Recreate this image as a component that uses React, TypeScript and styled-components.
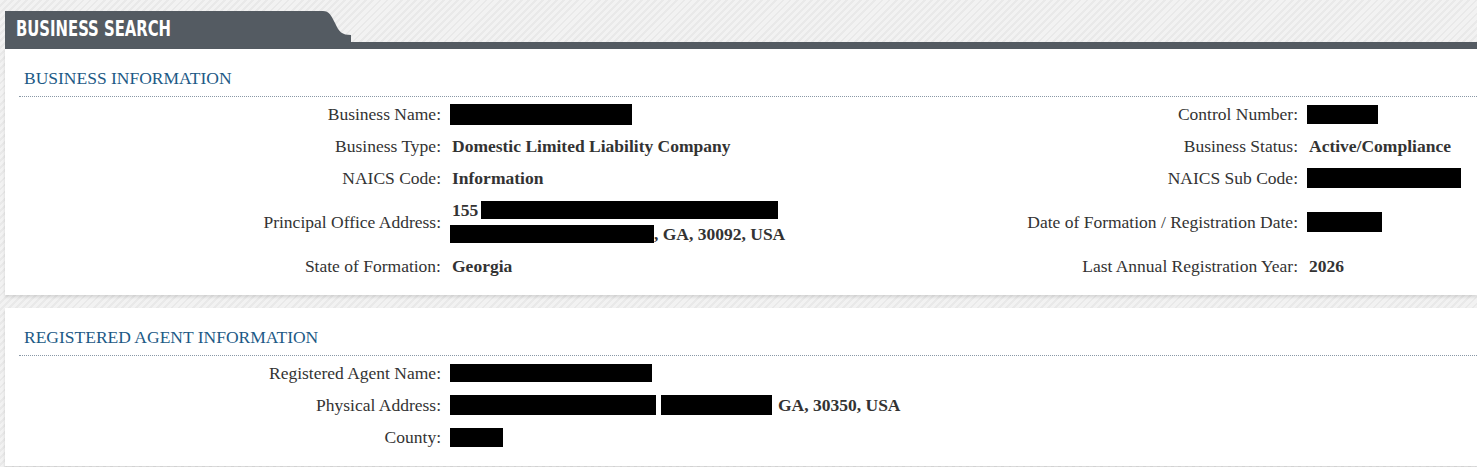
import styled, { createGlobalStyle } from "styled-components"

const GlobalStyle = createGlobalStyle`
  html, body {
    margin: 0;
    padding: 0;
  }
  body {
    background-color: #f0f0f0;
    background-image: repeating-linear-gradient(
      135deg,
      #f2f2f2 0px,
      #f2f2f2 3px,
      #e9e9e9 3px,
      #e9e9e9 5px
    );
    font-family: "Liberation Serif", "Times New Roman", serif;
    color: #333;
    min-height: 100vh;
  }
`

const Page = styled.div`
  padding: 11px 0 0 5px;
  display: flex;
  flex-direction: column;
  gap: 13px;
`

const TopBlock = styled.div`
  display: flex;
  flex-direction: column;
`

const HeaderBar = styled.header`
  display: flex;
  align-items: flex-end;
  border-bottom: 7px solid #545b62;
`

const HeaderTab = styled.div`
  background-color: #545b62;
  height: 31px;
  width: 304px;
  padding-left: 11px;
  display: flex;
  align-items: center;
  & h1 {
    margin: 0;
    color: #fff;
    font-family: "DejaVu Sans", "Liberation Sans", sans-serif;
    font-stretch: condensed;
    font-weight: bold;
    font-size: 22px;
    line-height: 31px;
    white-space: nowrap;
    transform: scaleX(0.75) translateY(2px);
    transform-origin: left center;
  }
`

const TabCurve = styled.svg`
  display: block;
  width: 31px;
  height: 31px;
`

const Card = styled.section`
  background: #fff;
  padding: 0 0 14px 14px;
  box-shadow: 0 2px 3px rgba(0, 0, 0, 0.12);
`

const SectionTitle = styled.h2`
  margin: 0;
  padding: 18px 0 7px 5px;
  font-family: "Liberation Serif", "Times New Roman", serif;
  font-weight: normal;
  font-size: 17.5px;
  line-height: 22px;
  color: #1d5a86;
  border-bottom: 1px dotted #8a98a6;
`

const InfoGrid = styled.div`
  display: grid;
  grid-template-columns: 422px 535px 300px 1fr;
  column-gap: 11px;
  font-size: 17.5px;
`

const Label = styled.div`
  display: flex;
  align-items: center;
  justify-content: flex-end;
  text-align: right;
  padding: 5px 0 3px;
  line-height: 24px;
  color: #333;
  white-space: nowrap;
`

const Value = styled.div`
  padding: 5px 0 3px;
  line-height: 24px;
  font-weight: bold;
  color: #333;
  white-space: nowrap;
`

const Line = styled.div`
  display: flex;
  align-items: center;
  height: 24px;
`

const Redact = styled.span<{ $w: number; $h?: number; $pull?: boolean }>`
  display: inline-block;
  width: ${({ $w }) => $w}px;
  height: ${({ $h }) => $h ?? 20}px;
  margin-left: ${({ $pull }) => ($pull ? "-2px" : "0")};
  background: #000;
  vertical-align: middle;
`

const Spacer = styled.span<{ $w: number }>`
  display: inline-block;
  width: ${({ $w }) => $w}px;
`

export default function App() {
  return (
    <>
      <GlobalStyle />
      <Page>
        <TopBlock>
          <HeaderBar>
            <HeaderTab>
              <h1>BUSINESS SEARCH</h1>
            </HeaderTab>
            <TabCurve viewBox="0 0 31 31">
              <path
                d="M0 0 L3 0 C9 0 11 4 15 12 C19 21 22 24 31 24 L31 31 L0 31 Z"
                fill="#545b62"
              />
            </TabCurve>
          </HeaderBar>
          <Card>
            <SectionTitle>BUSINESS INFORMATION</SectionTitle>
            <InfoGrid>
              <Label>Business Name:</Label>
              <Value>
                <Line><Redact $pull $w={182} $h={21} /></Line>
              </Value>
              <Label>Control Number:</Label>
              <Value>
                <Line><Redact $pull $w={71} $h={19} /></Line>
              </Value>

              <Label>Business Type:</Label>
              <Value>Domestic Limited Liability Company</Value>
              <Label>Business Status:</Label>
              <Value>Active/Compliance</Value>

              <Label>NAICS Code:</Label>
              <Value>Information</Value>
              <Label>NAICS Sub Code:</Label>
              <Value>
                <Line><Redact $pull $w={154} /></Line>
              </Value>

              <Label>Principal Office Address:</Label>
              <Value>
                <Line>155<Spacer $w={3} /><Redact $w={297} $h={18} /></Line>
                <Line><Redact $pull $w={204} $h={18} />, GA, 30092, USA</Line>
              </Value>
              <Label>Date of Formation / Registration Date:</Label>
              <Value>
                <Line style={{ height: 48 }}><Redact $pull $w={75} /></Line>
              </Value>

              <Label>State of Formation:</Label>
              <Value>Georgia</Value>
              <Label>Last Annual Registration Year:</Label>
              <Value>2026</Value>
            </InfoGrid>
          </Card>
        </TopBlock>

        <Card>
          <SectionTitle>REGISTERED AGENT INFORMATION</SectionTitle>
          <InfoGrid>
            <Label>Registered Agent Name:</Label>
            <Value>
              <Line><Redact $pull $w={202} $h={18} /></Line>
            </Value>
            <Label />
            <Value />

            <Label>Physical Address:</Label>
            <Value>
              <Line>
                <Redact $pull $w={206} />
                <Spacer $w={5} />
                <Redact $w={111} />
                <Spacer $w={6} />
                GA, 30350, USA
              </Line>
            </Value>
            <Label />
            <Value />

            <Label>County:</Label>
            <Value>
              <Line><Redact $pull $w={53} $h={19} /></Line>
            </Value>
            <Label />
            <Value />
          </InfoGrid>
        </Card>
      </Page>
    </>
  )
}
